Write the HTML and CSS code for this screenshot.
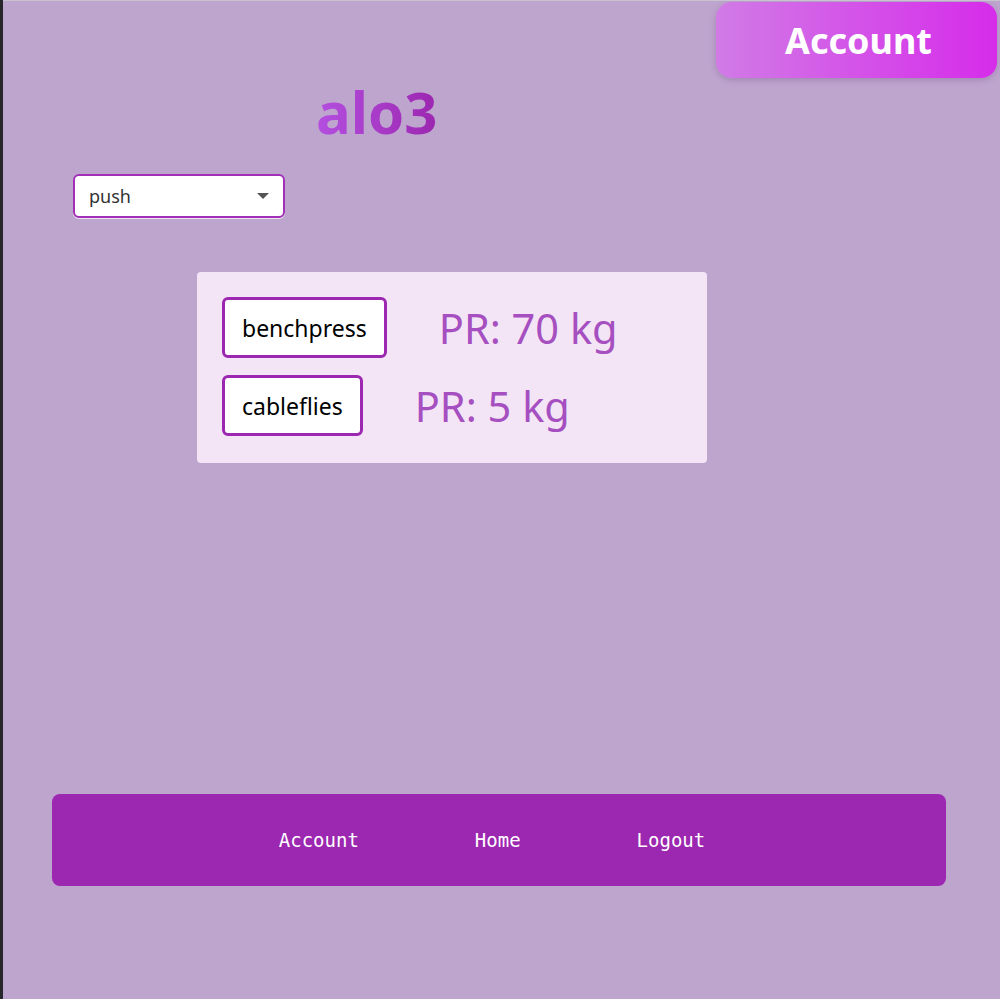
FILE: index.html
```html
<!DOCTYPE html>
<html lang="en">
<head>
<meta charset="utf-8">
<title>alo3</title>
<link rel="stylesheet" href="styles.css">
</head>
<body>
<div class="page">
  <header class="topbar">
    <button class="account-btn">Account</button>
  </header>
  <h1 class="title">alo3</h1>
  <div class="select">
    <span class="select-value">push</span>
    <span class="select-arrow"></span>
  </div>
  <section class="card">
    <div class="row">
      <div class="exercise">benchpress</div>
      <div class="pr">PR: 70 kg</div>
    </div>
    <div class="row">
      <div class="exercise">cableflies</div>
      <div class="pr">PR: 5 kg</div>
    </div>
  </section>
  <footer class="footer">
    <a class="nav-link">Account</a>
    <a class="nav-link">Home</a>
    <a class="nav-link">Logout</a>
  </footer>
</div>
</body>
</html>
```
FILE: styles.css
```css
html, body {
  margin: 0;
  padding: 0;
}
body {
  background: #26262b;
  font-family: "Noto Sans", "Open Sans", sans-serif;
}
.page {
  margin-left: 3px;
  height: 999px;
  background: #bea5ce;
  border-top: 1px solid #c9c3cf;
  box-sizing: border-box;
  overflow: hidden;
}
.topbar {
  display: flex;
  justify-content: flex-end;
  padding: 1px 3px 0 0;
}
.account-btn {
  width: 281px;
  height: 76px;
  border: none;
  border-radius: 16px;
  background: linear-gradient(to right, #d17be6, #d62cea);
  box-shadow: 0 2px 6px rgba(80, 40, 100, 0.25);
  color: #fff;
  font-family: "Noto Sans", sans-serif;
  font-weight: 700;
  font-size: 36px;
  padding: 0 0 0 4px;
}
.title {
  margin: -6px 0 0 313px;
  font-size: 58px;
  font-weight: 700;
  line-height: 80px;
  width: max-content;
  background: linear-gradient(to right, #b44fe0, #9c27b0);
  -webkit-background-clip: text;
  background-clip: text;
  color: transparent;
}
.select {
  margin: 22px 0 0 70px;
  width: 212px;
  height: 44px;
  box-sizing: border-box;
  border: 2px solid #a12fb7;
  border-radius: 6px;
  background: #fff;
  display: flex;
  align-items: center;
  justify-content: space-between;
  padding: 0 14px 0 14px;
  box-shadow: 0 1px 0 rgba(255,255,255,0.7);
}
.select-value {
  font-size: 18px;
  color: #333;
}
.select-arrow {
  width: 0;
  height: 0;
  border-left: 6px solid transparent;
  border-right: 6px solid transparent;
  border-top: 6px solid #555;
}
.card {
  margin: 54px 0 0 194px;
  width: 510px;
  box-sizing: border-box;
  background: #f3e5f5;
  border-radius: 4px;
  padding: 25px 25px 27px;
  display: flex;
  flex-direction: column;
  gap: 17px;
}
.row {
  display: flex;
  align-items: center;
  gap: 52px;
}
.exercise {
  height: 61px;
  box-sizing: border-box;
  border: 3px solid #9c27b0;
  border-radius: 6px;
  background: #fff;
  padding: 0 17px;
  display: flex;
  align-items: center;
  font-size: 23px;
  color: #000;
}
.pr {
  font-size: 41.5px;
  color: #a64fc0;
}
.footer {
  margin: 331px 0 0 49px;
  width: 894px;
  height: 92px;
  background: #9c27b0;
  border-radius: 8px;
  display: flex;
  align-items: center;
  justify-content: center;
  gap: 116px;
  padding-right: 14px;
  box-sizing: border-box;
}
.nav-link {
  font-family: "DejaVu Sans Mono", monospace;
  font-size: 19px;
  color: #fff;
}
```
